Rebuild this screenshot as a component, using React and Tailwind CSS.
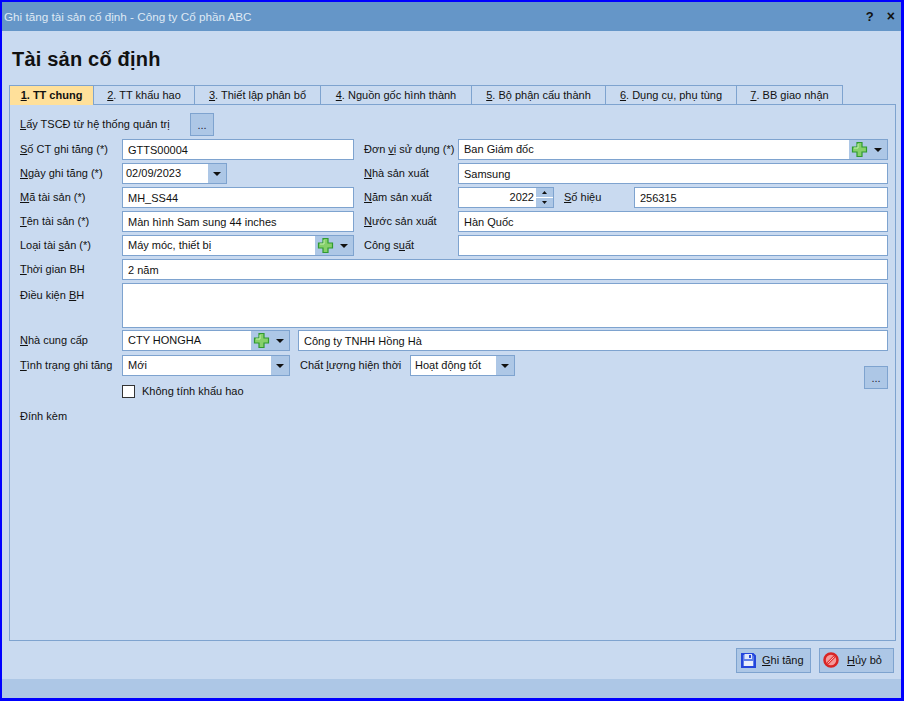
import React from "react";

const boxCls = "h-[21px] border border-[#7ea3cf] bg-white";
const inputCls = "h-[21px] border border-[#7ea3cf] bg-white px-[5px] text-[11px] text-[#111] outline-none";

function Plus() {
    return (
        <svg width="17" height="17" viewBox="0 0 17 17">
            <path d="M6 1.500h5v4.500h4.500v5H11v4.500H6V11H1.500V6H6z" fill="#86d06a" stroke="#2f9a2f" strokeWidth="1.200" />
            <path d="M7 3v4H3" fill="none" stroke="#c4efb0" strokeWidth="1" />
        </svg>
    );
}

function Caret() {
    return (
        <svg width="8" height="4" viewBox="0 0 8 4">
            <path d="M0 0h8L4 4z" fill="#111" />
        </svg>
    );
}

function Label({ children, className = "w-[102px]" }) {
    return <label className={`shrink-0 text-[11px] text-[#111] ${className}`}>{children}</label>;
}

function Text({ value, className = "" }) {
    return <input readOnly value={value} className={`${inputCls} ${className}`} />;
}

function Combo({ value, plus, className = "", pad = "pl-[5px]" }) {
    return (
        <div className={`${boxCls} flex items-center ${className}`}>
            <span className={`flex-1 truncate text-[11px] text-[#111] ${pad}`}>{value}</span>
            <div className="flex h-full items-center bg-[#adc7e6]">
                {plus && <span className="flex w-[20px] justify-center"><Plus /></span>}
                <span className="flex w-[18px] justify-center"><Caret /></span>
            </div>
        </div>
    );
}

function Dots({ className = "" }) {
    return (
        <button className={`h-[23px] w-[24px] border border-[#7ea3cf] bg-[#adc7e6] text-[11px] leading-[22px] text-[#223] ${className}`}>
            ...
        </button>
    );
}

function Spin({ value }) {
    return (
        <div className={`${boxCls} flex w-[96px] shrink-0 items-center`}>
            <span className="flex-1 pr-[2px] text-right text-[11px] text-[#111]">{value}</span>
            <div className="flex h-full w-[17px] flex-col gap-px bg-white">
                <span className="flex flex-1 items-center justify-center bg-[#adc7e6]">
                    <svg width="5" height="3" viewBox="0 0 5 3"><path d="M0 3h5L2.500 0z" fill="#111" /></svg>
                </span>
                <span className="flex flex-1 items-center justify-center bg-[#adc7e6]">
                    <svg width="5" height="3" viewBox="0 0 5 3"><path d="M0 0h5L2.500 3z" fill="#111" /></svg>
                </span>
            </div>
        </div>
    );
}

function Row({ children, className = "" }) {
    return <div className={`flex h-[21px] items-center ${className}`}>{children}</div>;
}

const tabs = [
    { n: "1", t: "TT chung", w: "w-[85px]" },
    { n: "2", t: "TT khấu hao", w: "w-[101px]" },
    { n: "3", t: "Thiết lập phân bổ", w: "w-[126px]" },
    { n: "4", t: "Nguồn gốc hình thành", w: "w-[151px]" },
    { n: "5", t: "Bộ phận cấu thành", w: "w-[134px]" },
    { n: "6", t: "Dụng cụ, phụ tùng", w: "w-[131px]" },
    { n: "7", t: "BB giao nhận", w: "w-[106px]" },
];

export default function App() {
    return (
        <div className="flex h-[701px] w-[904px] flex-col border-t-2 border-r-[3px] border-b-[3px] border-l-2 border-[#0000ff] bg-[#c9daf0] font-['Liberation_Sans',sans-serif]">
            {/* title bar */}
            <div className="flex h-[29px] shrink-0 items-center bg-[#6596c8] pr-[6px] pl-[2px]">
                <span className="flex-1 text-[11.700px] text-[#dfe9f4]">Ghi tăng tài sản cố định - Công ty Cổ phần ABC</span>
                <span className="mr-[13px] text-[13px] font-bold text-[#111]">?</span>
                <span className="text-[14px] font-bold text-[#111]">×</span>
            </div>

            <div className="flex min-h-0 flex-1 flex-col pr-[5px] pl-[7px]">
                <h1 className="flex h-[54px] shrink-0 items-center pt-[2px] pl-[3px] text-[20px] font-bold tracking-[0.2px] text-[#111]">Tài sản cố định</h1>

                {/* tabs */}
                <div className="relative z-10 flex h-[19px] shrink-0">
                    {tabs.map((tab, i) => (
                        <div
                            key={tab.n}
                            className={`${tab.w} flex items-center justify-center border-t border-r border-[#7ea3cf] text-[11px] text-[#111] ${i === 0 ? "h-[20px] border-l bg-[#ffe09a] text-[11.500px] font-bold" : ""}`}
                        >
                            <span><u>{tab.n}</u>. {tab.t}</span>
                        </div>
                    ))}
                </div>

                {/* panel */}
                <div className="flex min-h-0 flex-1 flex-col border border-[#7ea3cf] pt-[8px] pr-[7px] pl-[10px]">
                    <div className="flex h-[23px] items-center">
                        <Label className="w-[170px]"><u>L</u>ấy TSCĐ từ hệ thống quản trị</Label>
                        <Dots />
                    </div>

                    <div className="mt-[3px] flex flex-col gap-[3px]">
                        <Row>
                            <Label><u>S</u>ố CT ghi tăng (*)</Label>
                            <Text value="GTTS00004" className="w-[232px] shrink-0" />
                            <Label className="ml-[10px] w-[94px]">Đơn <u>v</u>ị sử dụng (*)</Label>
                            <Combo value="Ban Giám đốc" plus className="flex-1" />
                        </Row>
                        <Row>
                            <Label><u>N</u>gày ghi tăng (*)</Label>
                            <Combo value="02/09/2023" pad="pl-[3px]" className="w-[105px] shrink-0" />
                            <Label className="ml-[137px] w-[94px]"><u>N</u>hà sản xuất</Label>
                            <Text value="Samsung" className="min-w-0 flex-1" />
                        </Row>
                        <Row>
                            <Label><u>M</u>ã tài sản (*)</Label>
                            <Text value="MH_SS44" className="w-[232px] shrink-0" />
                            <Label className="ml-[10px] w-[94px]"><u>N</u>ăm sản xuất</Label>
                            <Spin value="2022" />
                            <Label className="ml-[10px] w-[70px]"><u>S</u>ố hiệu</Label>
                            <Text value="256315" className="min-w-0 flex-1" />
                        </Row>
                        <Row>
                            <Label><u>T</u>ên tài sản (*)</Label>
                            <Text value="Màn hình Sam sung 44 inches" className="w-[232px] shrink-0" />
                            <Label className="ml-[10px] w-[94px]"><u>N</u>ước sản xuất</Label>
                            <Text value="Hàn Quốc" className="min-w-0 flex-1" />
                        </Row>
                        <Row>
                            <Label>Loại tài <u>s</u>ản (*)</Label>
                            <Combo value="Máy móc, thiết bị" plus className="w-[232px] shrink-0" />
                            <Label className="ml-[10px] w-[94px]">Công s<u>u</u>ất</Label>
                            <Text value="" className="min-w-0 flex-1" />
                        </Row>
                        <Row>
                            <Label><u>T</u>hời gian BH</Label>
                            <Text value="2 năm" className="min-w-0 flex-1" />
                        </Row>
                        <div className="flex h-[45px] items-start">
                            <Label className="w-[102px] pt-[4px]">Điều kiện <u>B</u>H</Label>
                            <div className="h-[45px] flex-1 border border-[#7ea3cf] bg-white" />
                        </div>
                    </div>

                    <Row className="mt-[2px]">
                        <Label><u>N</u>hà cung cấp</Label>
                        <Combo value="CTY HONGHA" plus className="w-[168px] shrink-0" />
                        <Text value="Công ty TNHH Hồng Hà" className="ml-[8px] min-w-0 flex-1" />
                    </Row>

                    <div className="mt-[4px] flex items-start">
                        <div className="flex flex-col">
                            <Row>
                                <Label><u>T</u>ình trạng ghi tăng</Label>
                                <Combo value="Mới" className="w-[168px] shrink-0" />
                                <Label className="ml-[10px] w-[110px]">Chất <u>l</u>ượng hiện thời</Label>
                                <Combo value="Hoạt động tốt" pad="pl-[4px]" className="w-[105px] shrink-0" />
                            </Row>
                            <div className="mt-[8px] flex h-[14px] items-center pl-[102px]">
                                <span className="h-[13px] w-[13px] border border-[#333] bg-white" />
                                <span className="ml-[7px] text-[11px] text-[#111]">Không tính khấu hao</span>
                            </div>
                            <Label className="mt-[10px]">Đính kèm</Label>
                        </div>
                        <Dots className="mt-[11px] ml-auto" />
                    </div>
                </div>

                {/* buttons */}
                <div className="flex h-[38px] shrink-0 items-center justify-end gap-[8px] pr-[2px]">
                    <button className="flex h-[25px] w-[75px] items-center border border-[#7ea3cf] bg-[#adc7e6] pl-[4px] text-[11px] text-[#111]">
                        <svg width="15" height="15" viewBox="0 0 15 15" className="shrink-0">
                            <path d="M1 1h11l2 2v11H1z" fill="#5f7fe8" stroke="#2445dc" strokeWidth="2" />
                            <rect x="3.500" y="1" width="7.500" height="5" fill="#dfe7fb" />
                            <rect x="8" y="2" width="2" height="3" fill="#2445dc" />
                            <rect x="3" y="8" width="9" height="5" fill="#e9eefc" />
                        </svg>
                        <span className="ml-[6px]"><u>G</u>hi tăng</span>
                    </button>
                    <button className="flex h-[25px] w-[75px] items-center border border-[#7ea3cf] bg-[#adc7e6] pl-[3px] text-[11px] text-[#111]">
                        <svg width="16" height="16" viewBox="0 0 16 16" className="shrink-0">
                            <circle cx="8" cy="8" r="6.500" fill="#f59a9a" stroke="#d92525" strokeWidth="2.500" />
                            <path d="M4.500 11.500l7-7" stroke="#e23434" strokeWidth="2.500" />
                            <path d="M5 11l6-6" stroke="#ffd9d9" strokeWidth="0.800" />
                        </svg>
                        <span className="ml-[8px]"><u>H</u>ủy bỏ</span>
                    </button>
                </div>
            </div>

            {/* status band */}
            <div className="h-[19px] shrink-0 bg-[#adc7e6]" />
        </div>
    );
}
